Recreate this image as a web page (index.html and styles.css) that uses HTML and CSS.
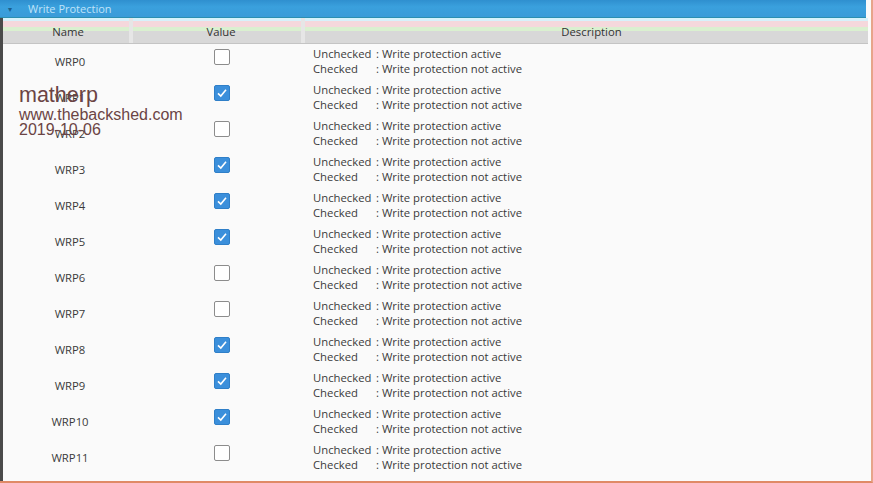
FILE: index.html
```html
<!DOCTYPE html>
<html>
<head>
<meta charset="utf-8">
<link rel="stylesheet" href="styles.css">
</head>
<body>
<div class="panel">
  <div class="titlebar"><span class="arrow">&#9662;</span><span class="title">Write Protection</span></div>
  <div class="grid">
    <div class="head">
      <div class="hcell name">Name</div>
      <div class="hcell value">Value</div>
      <div class="hcell desc">Description</div>
    </div>
    <div class="rows" id="rows"></div>
  </div>
  <div class="watermark">
    <div class="wm1">matherp</div>
    <div class="wm2">www.thebackshed.com</div>
    <div class="wm3">2019-10-06</div>
  </div>
</div>
<script>
  var checked = [0,1,0,1,1,1,0,0,1,1,1,0];
  var rows = document.getElementById('rows');
  checked.forEach(function (c, i) {
    var r = document.createElement('div');
    r.className = 'row';
    r.innerHTML =
      '<div class="cell name">WRP' + i + '</div>' +
      '<div class="cell value"><span class="cb' + (c ? ' on' : '') + '">' +
      (c ? '<svg viewBox="0 0 16 16" width="16" height="16"><path d="M4 8.3 L6.8 11 L12 4.8" fill="none" stroke="#fff" stroke-width="1.6"/></svg>' : '') +
      '</span></div>' +
      '<div class="cell desc"><div class="l"><span class="k">Unchecked</span><span class="v">: Write protection active</span></div>' +
      '<div class="l"><span class="k">Checked</span><span class="v">: Write protection not active</span></div></div>';
    rows.appendChild(r);
  });
</script>
</body>
</html>
```

FILE: styles.css
```css
html, body {
  margin: 0;
  padding: 0;
  background: #fafafa;
}
body {
  font-family: "Open Sans", "Noto Sans", sans-serif;
  color: #3a3a3a;
  width: 873px;
  height: 483px;
  overflow: hidden;
}
.panel {
  position: relative;
  width: 871px;
  height: 481px;
  border-right: 2px solid #e7a48a;
  border-bottom: 2px solid #e08a66;
  background: #fafafa;
  display: flex;
  flex-direction: column;
}
.titlebar {
  height: 17px;
  background: linear-gradient(#2f8fcf, #3aa0dd 40%, #3a9bd8);
  border-bottom: 1px solid #2b8fb0;
  display: flex;
  align-items: center;
  font-size: 11px;
  padding-left: 8px;
  gap: 16px;
  margin-right: 5px;
}
.arrow {
  font-size: 8px;
  color: #1c5f8c;
}
.title {
  color: #d6efff;
  opacity: 0.85;
}
.grid {
  flex: 1;
  border-left: 3px solid #4a4a4a;
  display: flex;
  flex-direction: column;
}
.head {
  display: grid;
  grid-template-columns: 130px 172px 1fr;
  height: 25px;
  background: linear-gradient(#d6f2fb 0, #d6f2fb 3px, #f5d8dc 3px, #f5d8dc 9px, #daf0d0 9px, #daf0d0 13px, #d8d8d8 13px);
  border-bottom: 1px solid #c4c4c4;
  margin-right: 3px;
}
.hcell {
  font-size: 11.3px;
  color: #333;
  text-align: center;
  padding-top: 6px;
  border-right: 4px solid #e6e6e6;
}
.hcell.name {
  padding-left: 4px;
}
.hcell.value {
  padding-left: 8px;
}
.hcell.desc {
  border-right: none;
  padding-left: 10px;
}
.rows {
  display: flex;
  flex-direction: column;
}
.row {
  display: grid;
  grid-template-columns: 134px 176px 1fr;
  height: 36px;
  align-items: center;
}
.cell {
  font-size: 11.3px;
}
.cell.name {
  text-align: center;
  margin-top: -2px;
}
.cell.value {
  display: flex;
  justify-content: center;
  padding-right: 6px;
  margin-top: -10px;
}
.cb {
  width: 16px;
  height: 16px;
  box-sizing: border-box;
  border: 1px solid #8c8c8c;
  border-radius: 2px;
  background: #fff;
  display: block;
}
.cb.on {
  border: 1px solid #2f7fc8;
  background: #3b8fdb;
}
.cb svg {
  display: block;
  margin: -1px;
}
.cell.desc {
  font-size: 11.3px;
  line-height: 15px;
  color: #3a3a3a;
  margin-top: -3px;
}
.l {
  display: flex;
}
.k {
  width: 63px;
}
.watermark {
  position: absolute;
  left: 19px;
  top: 84px;
  font-family: "Liberation Sans", Arial, sans-serif;
  color: #6b4444;
}
.wm1 {
  font-size: 21.5px;
  line-height: 23px;
}
.wm2, .wm3 {
  font-size: 16px;
  line-height: 15px;
}
```
